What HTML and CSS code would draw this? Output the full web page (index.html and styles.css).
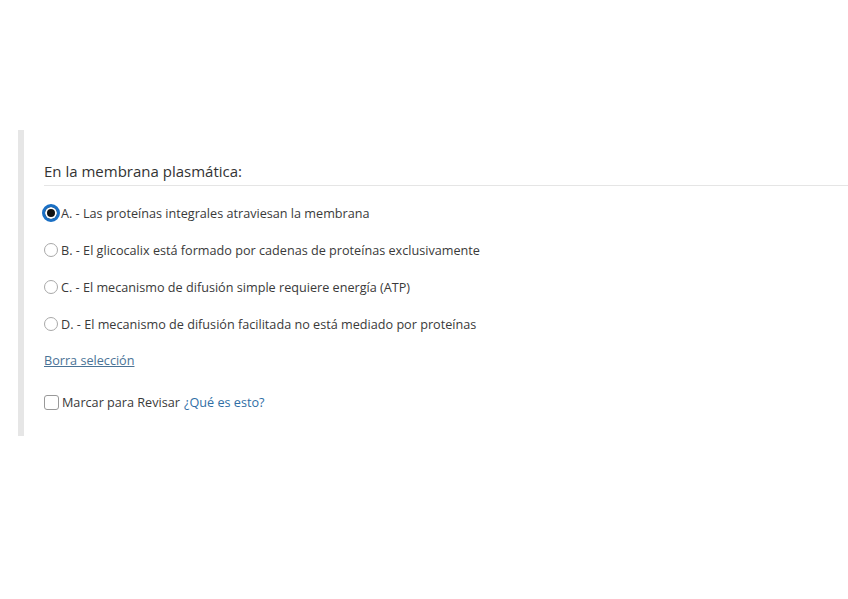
FILE: index.html
```html
<!DOCTYPE html>
<html lang="es">
<head>
<meta charset="utf-8">
<link rel="stylesheet" href="styles.css">
</head>
<body>
<div class="page">
  <div class="question">
    <div class="qtext">En la membrana plasmática:</div>
    <div class="options">
      <label class="opt"><span class="radio checked"></span><span>A. - Las proteínas integrales atraviesan la membrana</span></label>
      <label class="opt"><span class="radio"></span><span>B. - El glicocalix está formado por cadenas de proteínas exclusivamente</span></label>
      <label class="opt"><span class="radio"></span><span>C. - El mecanismo de difusión simple requiere energía (ATP)</span></label>
      <label class="opt"><span class="radio"></span><span>D. - El mecanismo de difusión facilitada no está mediado por proteínas</span></label>
    </div>
    <a class="clear" href="#">Borra selección</a>
    <div class="review"><span class="check"></span><span>Marcar para Revisar</span> <a class="what" href="#">¿Qué es esto?</a></div>
  </div>
</div>
</body>
</html>
```
FILE: styles.css
```css
html, body { margin: 0; padding: 0; background: #fff; }
body { font-family: "Open Sans", "Noto Sans", sans-serif; color: #3a3a3a; }
.page { padding-top: 130px; padding-left: 18px; }
.question {
  border-left: 6px solid #e6e6e6;
  padding: 30px 0 22px 20px;
  height: 254px;
  box-sizing: content-box;
}
.qtext {
  font-size: 15px;
  line-height: 22px;
  padding-bottom: 3px;
  border-bottom: 1px solid #e5e5e5;
  color: #333;
}
.options { display: flex; flex-direction: column; gap: 15px; padding-top: 16px; }
.opt { display: flex; align-items: center; font-size: 12.65px; line-height: 22px; }
.radio {
  width: 14px; height: 14px; border: 1px solid #a8a8a8; border-radius: 50%;
  box-sizing: border-box; margin-right: 3px; flex: none;
}
.radio.checked {
  width: 18px; height: 18px; margin-left: -2px; margin-right: 1px;
  border: 3px solid #1a6fc4; background: #111;
  box-shadow: inset 0 0 0 2px #fff;
}
.clear {
  display: inline-block; margin-top: 14px; font-size: 12.65px; line-height: 22px;
  color: #4a7396; text-decoration: underline;
}
.review { display: flex; align-items: center; margin-top: 20px; font-size: 12.65px; line-height: 22px; }
.check {
  width: 15px; height: 15px; border: 1px solid #999; border-radius: 3px;
  box-sizing: border-box; margin-right: 3px;
}
.what { color: #2f6ea5; text-decoration: none; margin-left: 4px; }
```
